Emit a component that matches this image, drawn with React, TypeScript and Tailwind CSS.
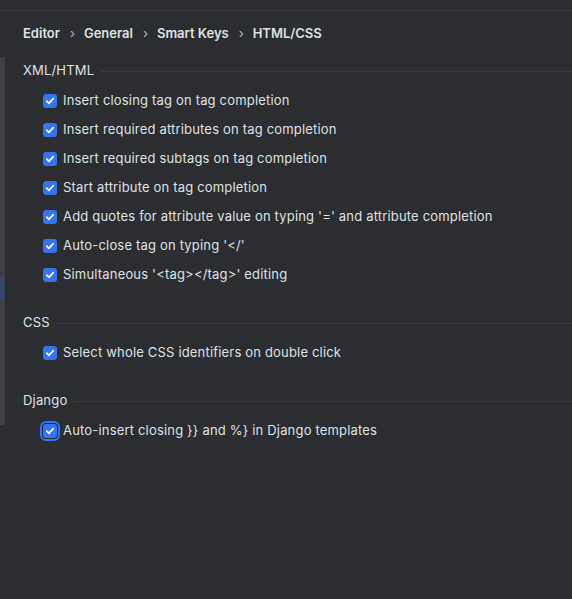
import type { ReactNode } from "react";

const crumbs = ["Editor", "General", "Smart Keys", "HTML/CSS"];

const xmlItems = [
  "Insert closing tag on tag completion",
  "Insert required attributes on tag completion",
  "Insert required subtags on tag completion",
  "Start attribute on tag completion",
  "Add quotes for attribute value on typing '=' and attribute completion",
  "Auto-close tag on typing '</'",
  "Simultaneous '<tag></tag>' editing",
];

function Check({ focused }: { focused?: boolean }) {
  return (
    <span
      className={
        "flex h-[14px] w-[14px] shrink-0 items-center justify-center rounded-[3px] bg-[#3574f0] " +
        (focused ? "outline-2 outline-offset-1 outline-[#3574f0]" : "")
      }
    >
      <svg width="10" height="10" viewBox="0 0 10 10" fill="none">
        <path d="M1.8 5.2 L4 7.3 L8.3 2.6" stroke="white" strokeWidth="1.7" strokeLinecap="round" strokeLinejoin="round" />
      </svg>
    </span>
  );
}

function Row({ label, focused }: { label: string; focused?: boolean }) {
  return (
    <div className="flex h-[29px] items-center gap-[6px] pl-[20px]">
      <Check focused={focused} />
      <span className="tracking-[0.18px]">{label}</span>
    </div>
  );
}

function Section({ title, children, className = "" }: { title: string; children: ReactNode; className?: string }) {
  return (
    <div className={className}>
      <div className="flex h-[30px] items-center">
        <span className="tracking-[0.18px]">{title}</span>
        <div className="ml-[7px] h-px flex-1 bg-[#393b40]" />
      </div>
      {children}
    </div>
  );
}

export default function App() {
  return (
    <div
      className="flex h-[599px] w-[572px] flex-col overflow-hidden bg-[#2b2d30] text-[13px] text-[#dfe1e5]"
      style={{ fontFamily: "Inter, 'Noto Sans', sans-serif" }}
    >
      <div className="h-[10px] shrink-0" />
      <div className="h-px shrink-0 bg-[#393b40]" />
      <div className="flex min-h-0 flex-1 pt-px">
        <div className="mt-[45px] h-[368px] w-[5px] shrink-0 bg-[#3e4044]">
          <div className="mt-[221px] h-[22px] w-full bg-[#36476b]" />
        </div>
        <div className="min-w-0 flex-1 pl-[18px]">
          <div className="flex h-[44px] items-center font-semibold">
            {crumbs.map((c, i) => (
              <span key={c} className="flex items-center">
                {i > 0 && <span className="ml-[10px] mr-[9px] font-normal text-[#b4b8bf]">›</span>}
                {c}
              </span>
            ))}
          </div>
          <Section title="XML/HTML">
            {xmlItems.map((t) => (
              <Row key={t} label={t} />
            ))}
          </Section>
          <Section title="CSS" className="mt-[19px]">
            <Row label="Select whole CSS identifiers on double click" />
          </Section>
          <Section title="Django" className="mt-[19px]">
            <Row label="Auto-insert closing }} and %} in Django templates" focused />
          </Section>
        </div>
      </div>
    </div>
  );
}
